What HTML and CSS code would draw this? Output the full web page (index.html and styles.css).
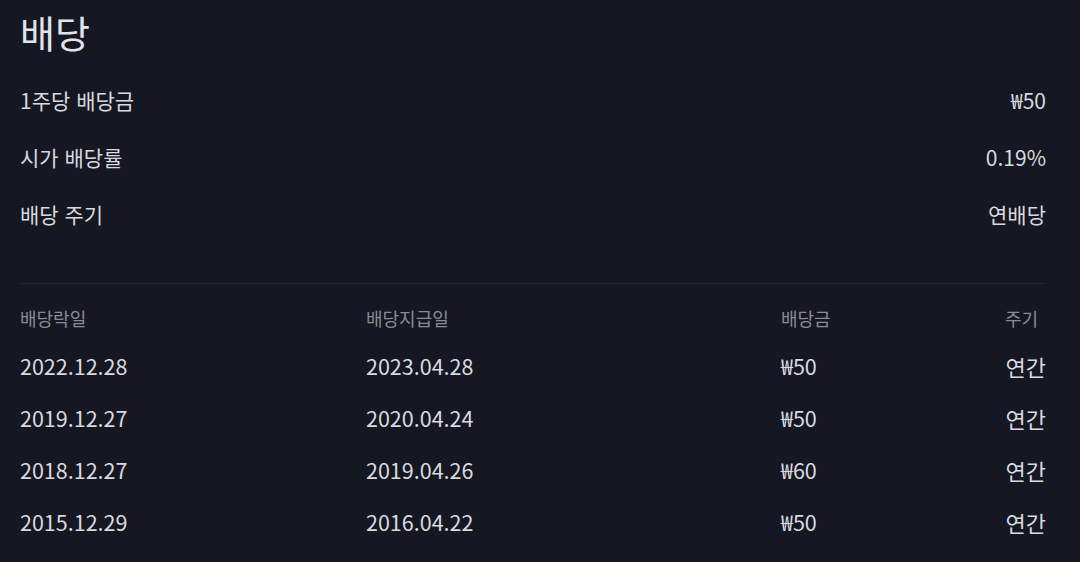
FILE: index.html
```html
<!DOCTYPE html>
<html lang="ko">
<head>
<meta charset="utf-8">
<link rel="stylesheet" href="styles.css">
</head>
<body>
<div class="page">
  <h1 class="title">배당</h1>
  <div class="info">
    <div class="info-row"><span>1주당 배당금</span><span>₩50</span></div>
    <div class="info-row"><span>시가 배당률</span><span>0.19%</span></div>
    <div class="info-row"><span>배당 주기</span><span>연배당</span></div>
  </div>
  <div class="divider"></div>
  <div class="table">
    <div class="trow thead"><span>배당락일</span><span>배당지급일</span><span>배당금</span><span>주기</span></div>
    <div class="trow"><span>2022.12.28</span><span>2023.04.28</span><span>₩50</span><span class="kr">연간</span></div>
    <div class="trow"><span>2019.12.27</span><span>2020.04.24</span><span>₩50</span><span class="kr">연간</span></div>
    <div class="trow"><span>2018.12.27</span><span>2019.04.26</span><span>₩60</span><span class="kr">연간</span></div>
    <div class="trow"><span>2015.12.29</span><span>2016.04.22</span><span>₩50</span><span class="kr">연간</span></div>
  </div>
</div>
</body>
</html>
```

FILE: styles.css
```css
html, body {
  margin: 0;
  padding: 0;
  background: #151722;
}
body {
  font-family: "Noto Sans CJK KR", "Noto Sans", sans-serif;
  color: #d9d9df;
}
.page {
  padding: 10px 34px 0 20px;
}
.title {
  margin: 0;
  font-size: 38px;
  line-height: 44px;
  font-weight: 400;
  color: #e2e2ea;
}
.info {
  margin-top: 18px;
}
.info-row {
  display: flex;
  justify-content: space-between;
  height: 57px;
  line-height: 57px;
  font-size: 21px;
}
.divider {
  margin-top: 40px;
  height: 1px;
  background: #222532;
}
.table {
  padding-top: 12px;
}
.trow {
  display: grid;
  grid-template-columns: 346px 415px 224px 1fr;
  height: 52px;
  line-height: 52px;
  font-size: 21.5px;
}
.trow .kr {
  font-size: 22px;
}
.trow span:last-child {
  text-align: right;
}
.thead {
  height: 44px;
  line-height: 44px;
  font-size: 18px;
  color: #8b8b93;
}
.thead span:last-child {
  text-align: left;
}
```
